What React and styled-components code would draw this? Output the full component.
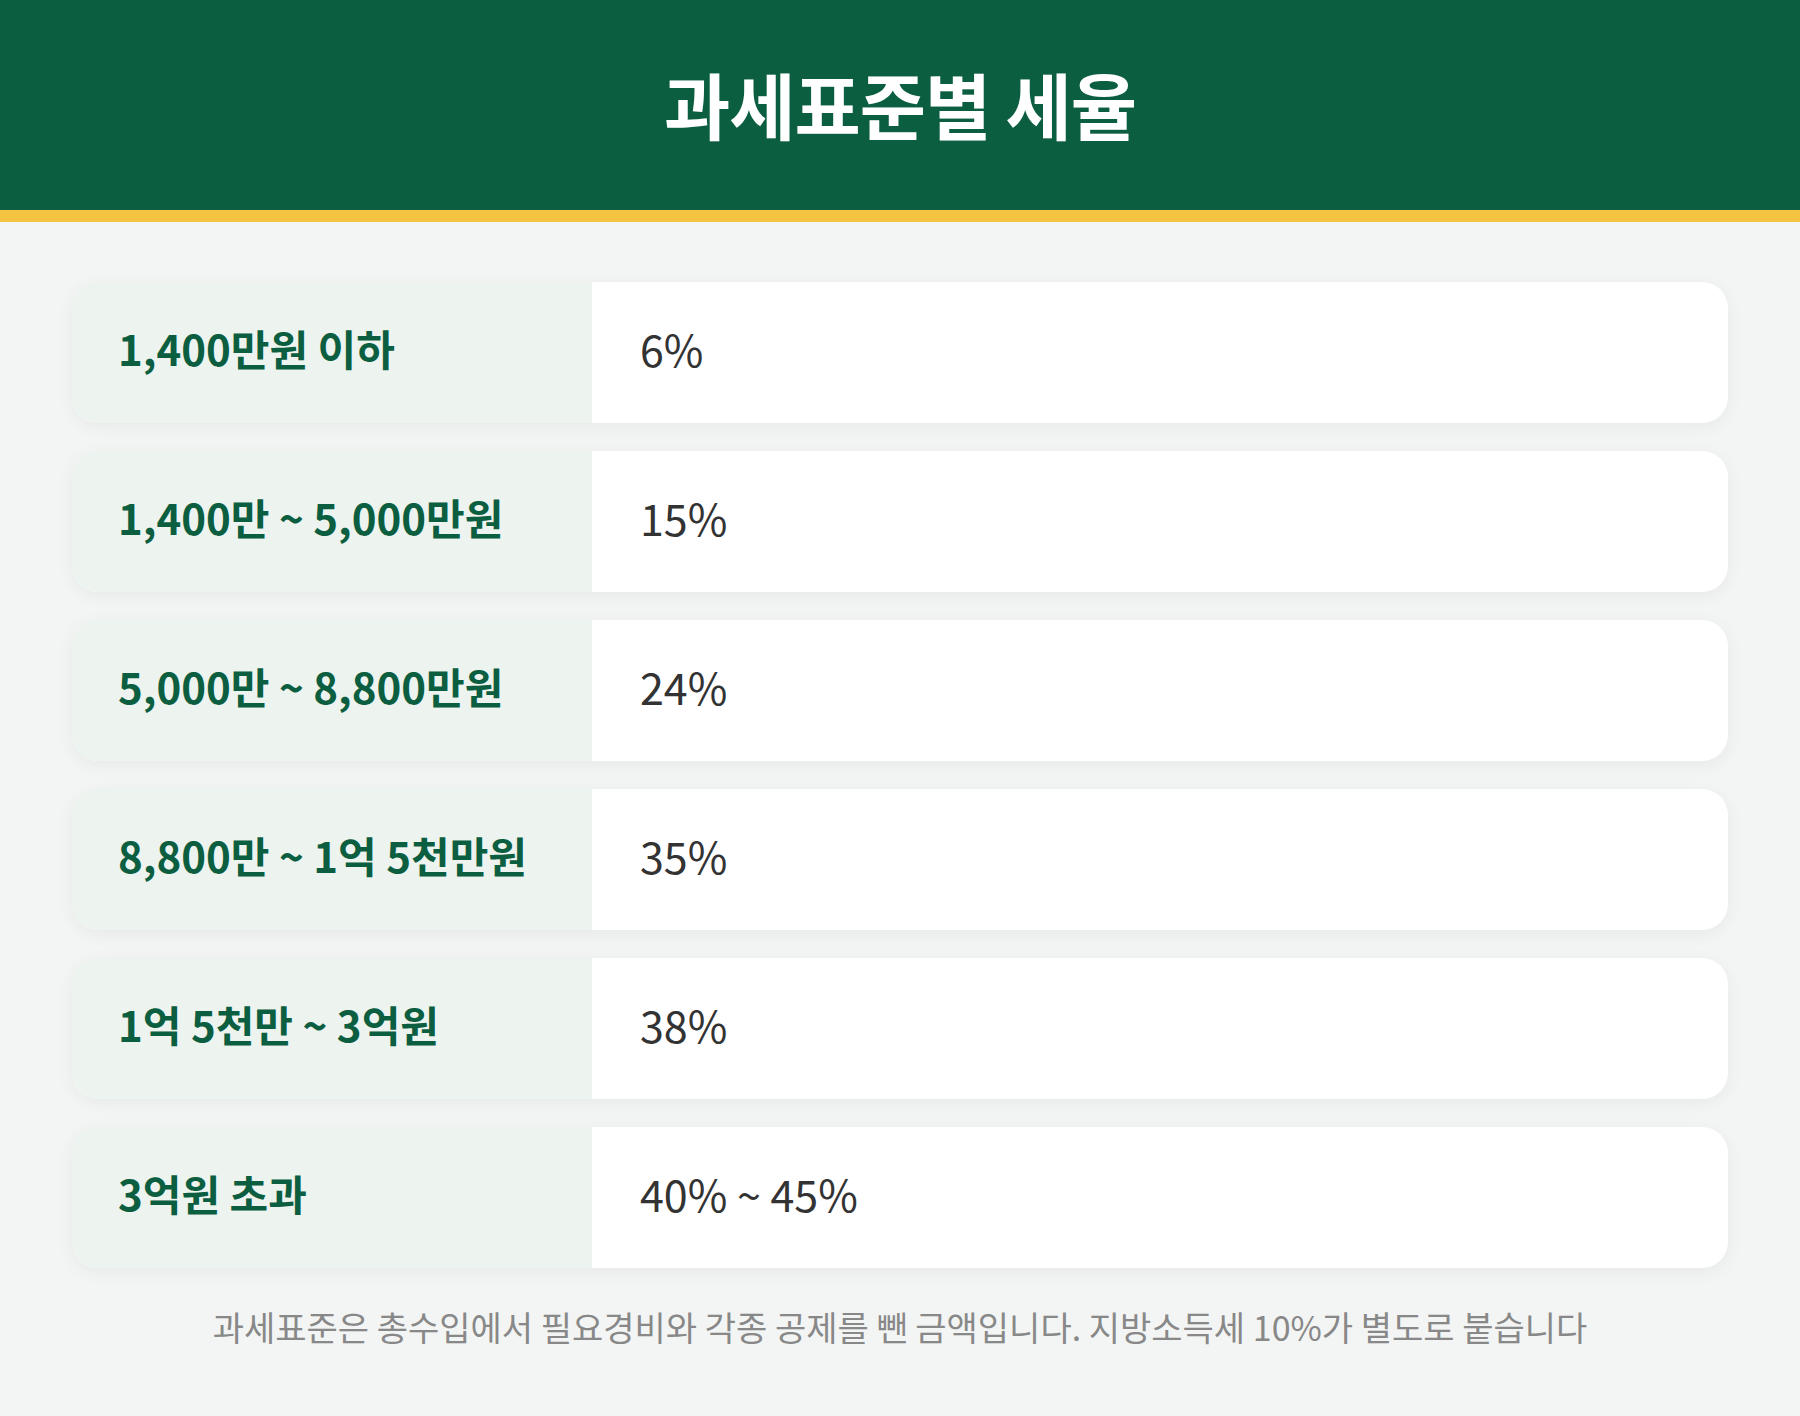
import React from 'react';
import styled, { createGlobalStyle } from 'styled-components';

const GlobalStyle = createGlobalStyle`
  html, body {
    margin: 0;
    padding: 0;
    background: #f3f5f4;
    font-family: "Noto Sans CJK KR", "Noto Sans", sans-serif;
  }
`;

const rates = [
  { bracket: '1,400만원 이하', rate: '6%' },
  { bracket: '1,400만 ~ 5,000만원', rate: '15%' },
  { bracket: '5,000만 ~ 8,800만원', rate: '24%' },
  { bracket: '8,800만 ~ 1억 5천만원', rate: '35%' },
  { bracket: '1억 5천만 ~ 3억원', rate: '38%' },
  { bracket: '3억원 초과', rate: '40% ~ 45%' },
];

function App() {
  return (
    <Page>
      <GlobalStyle />
      <Header>
        <Title>과세표준별 세율</Title>
      </Header>
      <Content>
        <List>
          {rates.map(r => (
            <Row key={r.bracket}>
              <Bracket>{r.bracket}</Bracket>
              <Rate>{r.rate}</Rate>
            </Row>
          ))}
        </List>
        <Note>과세표준은 총수입에서 필요경비와 각종 공제를 뺀 금액입니다. 지방소득세 10%가 별도로 붙습니다</Note>
      </Content>
    </Page>
  );
}

export default App;

const Page = styled.div`
  min-height: 1416px;
  background: #f3f5f4;
`;

const Header = styled.header`
  height: 210px;
  background: #0c5e41;
  border-bottom: 12px solid #f5c342;
  display: flex;
  align-items: center;
  justify-content: center;
`;

const Title = styled.h1`
  margin: 0;
  padding-bottom: 6px;
  color: #fff;
  font-size: 72px;
  font-weight: 700;
  letter-spacing: -1px;
`;

const Content = styled.main`
  padding: 60px 72px 0;
`;

const List = styled.div`
  display: flex;
  flex-direction: column;
  gap: 28px;
`;

const Row = styled.div`
  display: grid;
  grid-template-columns: 520px 1fr;
  height: 141px;
  border-radius: 26px;
  overflow: hidden;
  background: #fff;
  box-shadow: 0 4px 18px rgba(0, 0, 0, 0.05);
`;

const Bracket = styled.div`
  display: flex;
  align-items: center;
  padding: 0 0 10px 46px;
  background: #edf3ef;
  color: #0c5e41;
  font-size: 42px;
  font-weight: 700;
`;

const Rate = styled.div`
  display: flex;
  align-items: center;
  padding: 0 0 10px 48px;
  color: #333;
  font-size: 43px;
  font-weight: 400;
`;

const Note = styled.p`
  margin: 34px 0 0;
  text-align: center;
  color: #888;
  font-size: 34px;
`;
